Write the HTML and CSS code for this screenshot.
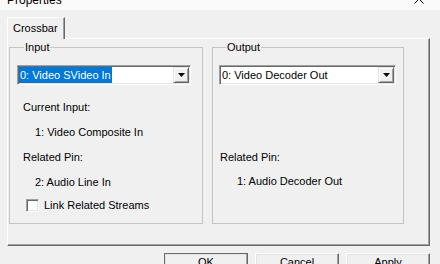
FILE: index.html
```html
<!DOCTYPE html>
<html>
<head>
<meta charset="utf-8">
<link rel="stylesheet" href="styles.css">
</head>
<body>
<div class="window">
  <div class="titlebar">
    <span class="title">Properties</span>
    <svg class="close" viewBox="0 0 10 10" width="10" height="10"><path d="M0.5 0.5 L9.5 9.5 M9.5 0.5 L0.5 9.5" stroke="#000" stroke-width="1" fill="none"/></svg>
  </div>
  <div class="main">
    <div class="tabs"><div class="tab">Crossbar</div></div>
    <div class="page">
      <fieldset class="group group-input">
        <legend>Input</legend>
        <div class="combo combo-input">
          <span class="combo-text selected">0: Video SVideo In</span>
          <span class="combo-btn"><svg viewBox="0 0 7 4" width="7" height="4"><path d="M0 0 H7 L3.5 4 Z" fill="#000"/></svg></span>
        </div>
        <div class="label first">Current Input:</div>
        <div class="value">1: Video Composite In</div>
        <div class="label">Related Pin:</div>
        <div class="value">2: Audio Line In</div>
        <div class="check"><span class="box"></span><span>Link Related Streams</span></div>
      </fieldset>
      <fieldset class="group group-output">
        <legend>Output</legend>
        <div class="combo combo-output">
          <span class="combo-text">0: Video Decoder Out</span>
          <span class="combo-btn"><svg viewBox="0 0 7 4" width="7" height="4"><path d="M0 0 H7 L3.5 4 Z" fill="#000"/></svg></span>
        </div>
        <div class="label out-first">Related Pin:</div>
        <div class="value">1: Audio Decoder Out</div>
      </fieldset>
    </div>
    <div class="buttons">
      <div class="btn default">OK</div>
      <div class="btn">Cancel</div>
      <div class="btn">Apply</div>
    </div>
  </div>
</div>
</body>
</html>
```

FILE: styles.css
```css
html, body {
  margin: 0;
  padding: 0;
}
body {
  width: 440px;
  height: 264px;
  overflow: hidden;
  background: #f0f0f0;
  font-family: "Liberation Sans", Arial, sans-serif;
  font-size: 11px;
  color: #000;
}
.window {
  width: 440px;
  height: 264px;
  overflow: hidden;
}
.titlebar {
  height: 10px;
  background: #fafafa;
  display: flex;
  justify-content: space-between;
  padding: 0 16px 0 7px;
  overflow: hidden;
}
.title {
  font-size: 12px;
  line-height: 16px;
  margin-top: -8px;
}
.close {
  margin-top: -6px;
  display: block;
}
.main {
  padding: 7px 10px 0 7px;
}
.tabs {
  display: flex;
  height: 21px;
}
.tab {
  position: relative;
  z-index: 1;
  box-sizing: border-box;
  width: 58px;
  height: 22px;
  background: #f0f0f0;
  border-top: 1px solid #fff;
  border-left: 1px solid #fff;
  border-right: 1px solid #696969;
  box-shadow: inset -1px 0 #a0a0a0;
  padding: 4px 0 0 5px;
  line-height: 13px;
}
.page {
  box-sizing: border-box;
  height: 208px;
  border: 1px solid;
  border-color: #fff #696969 #696969 #fff;
  box-shadow: inset -1px -1px #a0a0a0;
  padding: 2px 0 0 1px;
  display: flex;
  align-items: flex-start;
  gap: 9px;
}
.group {
  box-sizing: border-box;
  margin: 0;
  min-width: 0;
  height: 183px;
  border: 1px solid #c4c4c4;
  padding: 11px 0 0 7px;
}
.group-input {
  width: 194px;
}
.group-output {
  width: 192px;
  padding-left: 6px;
}
.group legend {
  margin-left: 7px;
  padding: 0 1px;
  line-height: 13px;
}
.combo {
  box-sizing: border-box;
  height: 20px;
  background: #fff;
  border: 1px solid;
  border-color: #a0a0a0 #fff #fff #a0a0a0;
  box-shadow: inset 1px 1px #696969, inset -1px -1px #e3e3e3;
  padding: 1px;
  display: flex;
  align-items: stretch;
}
.combo-input {
  width: 174px;
}
.combo-output {
  width: 177px;
}
.combo-text {
  line-height: 16px;
  padding: 0 1px;
  white-space: nowrap;
}
.combo-text.selected {
  background: #0078d7;
  color: #fff;
}
.combo-btn {
  margin-left: auto;
  box-sizing: border-box;
  width: 16px;
  height: 16px;
  background: #f0f0f0;
  border: 1px solid;
  border-color: #e3e3e3 #696969 #696969 #e3e3e3;
  box-shadow: inset 1px 1px #fff, inset -1px -1px #a0a0a0;
  display: flex;
  align-items: center;
  justify-content: center;
}
.combo-btn svg {
  display: block;
}
.label, .value {
  line-height: 13px;
  white-space: nowrap;
}
.label {
  margin: 12px 0 0 6px;
}
.label.first {
  margin-top: 16px;
}
.value {
  margin: 12px 0 0 18px;
}
.group-input .value + .label {
  margin-top: 12px;
}
.group-input .value:nth-of-type(2) {
  margin-top: 12px;
}
.group-output .label {
  margin-left: 1px;
}
.label.out-first {
  margin-top: 66px;
}
.group-output .value {
  margin-left: 18px;
  margin-top: 11px;
}
.check {
  display: flex;
  align-items: center;
  gap: 5px;
  margin: 10px 0 0 9px;
  line-height: 13px;
}
.box {
  box-sizing: border-box;
  width: 13px;
  height: 13px;
  background: #fff;
  border: 1px solid;
  border-color: #a0a0a0 #fff #fff #a0a0a0;
  box-shadow: inset 1px 1px #696969, inset -1px -1px #e3e3e3;
}
.buttons {
  display: flex;
  justify-content: flex-end;
  gap: 7px;
  margin-top: 7px;
}
.btn {
  box-sizing: border-box;
  width: 84px;
  height: 23px;
  border: 1px solid;
  border-color: #fff #696969 #696969 #fff;
  box-shadow: inset -1px -1px #a0a0a0, inset 1px 1px #e3e3e3;
  text-align: center;
  line-height: 13px;
  padding-top: 2px;
  background: #f0f0f0;
}
.btn.default {
  border-color: #696969;
}
```
